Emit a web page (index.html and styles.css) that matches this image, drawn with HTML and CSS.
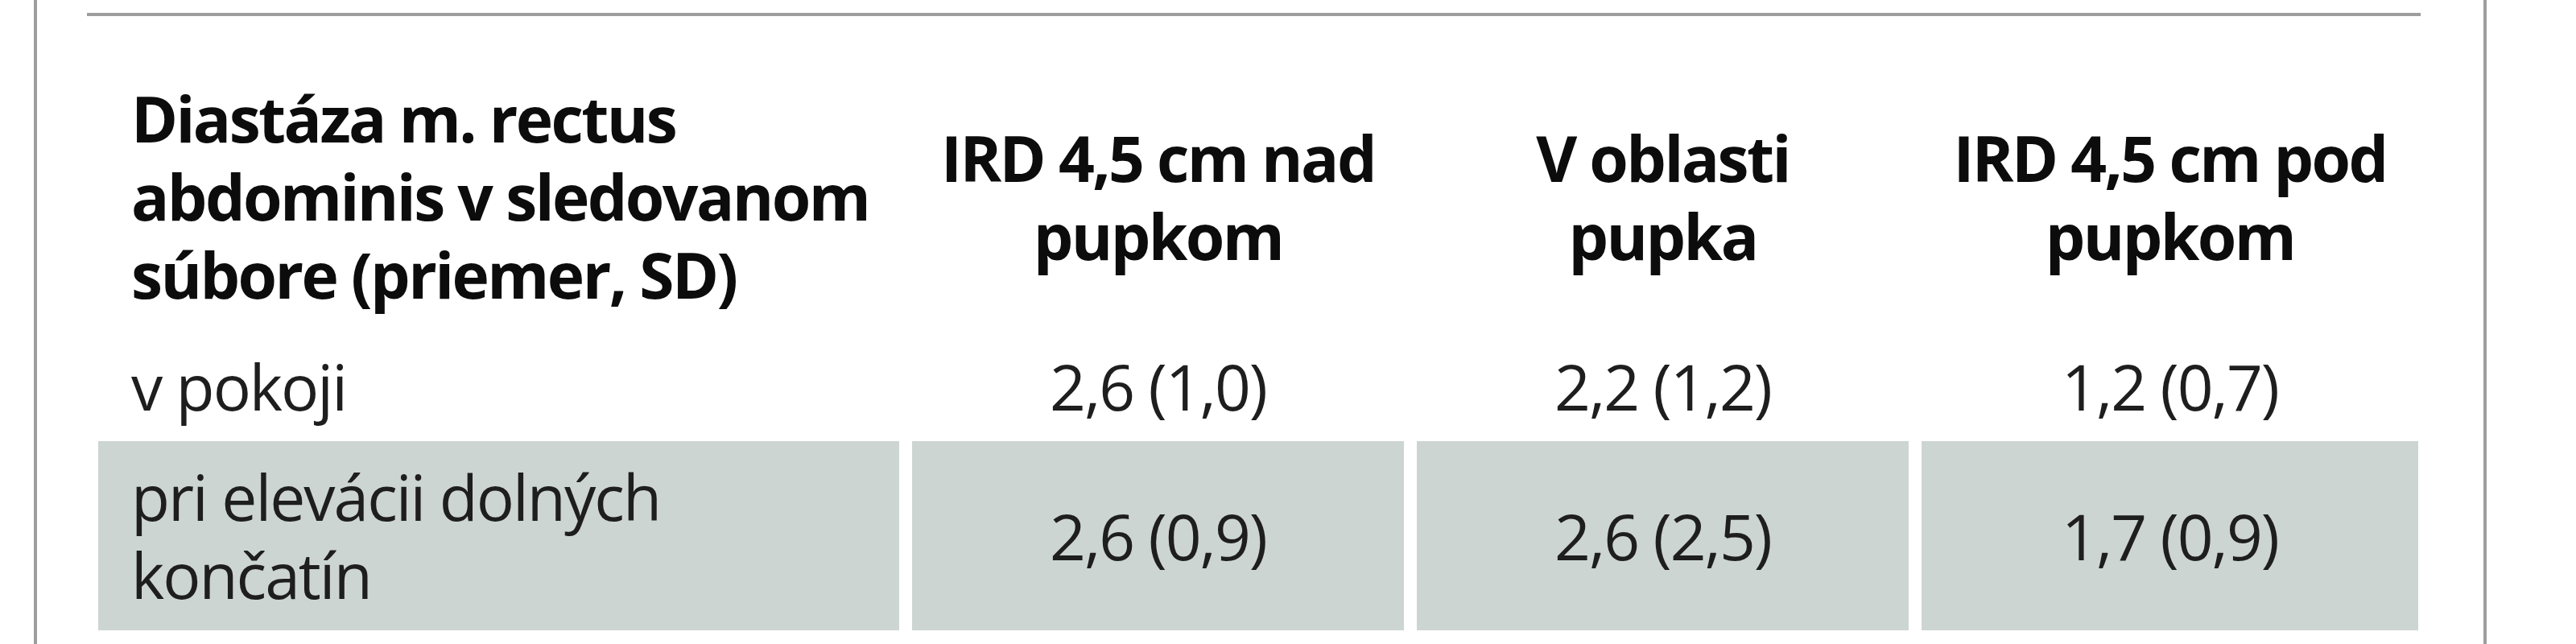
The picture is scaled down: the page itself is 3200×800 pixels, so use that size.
FILE: index.html
```html
<!DOCTYPE html>
<html lang="sk">
<head>
<meta charset="utf-8">
<title>Diastáza m. rectus abdominis</title>
<link rel="stylesheet" href="styles.css">
</head>
<body>
<div class="frame">
  <div class="rule"></div>
  <div class="grid">
    <div class="cell label head">Diastáza m. rectus<br>abdominis v sledovanom<br>súbore (priemer, SD)</div>
    <div class="cell head">IRD 4,5 cm nad<br>pupkom</div>
    <div class="cell head">V oblasti<br>pupka</div>
    <div class="cell head">IRD 4,5 cm pod<br>pupkom</div>

    <div class="cell label">v pokoji</div>
    <div class="cell">2,6 (1,0)</div>
    <div class="cell">2,2 (1,2)</div>
    <div class="cell">1,2 (0,7)</div>

    <div class="cell label shade">pri elevácii dolných<br>končatín</div>
    <div class="cell shade">2,6 (0,9)</div>
    <div class="cell shade">2,6 (2,5)</div>
    <div class="cell shade">1,7 (0,9)</div>
  </div>
</div>
</body>
</html>
```

FILE: styles.css
```css
html, body {
  margin: 0;
  padding: 0;
  background: #ffffff;
}

body {
  font-family: "Open Sans", "Noto Sans", sans-serif;
}

.frame {
  box-sizing: border-box;
  margin-left: 42px;
  width: 3047px;
  height: 800px;
  border-left: 4px solid #9d9d9d;
  border-right: 4px solid #9d9d9d;
  padding-top: 16px;
}

.rule {
  margin-left: 62px;
  width: 2899px;
  height: 4px;
  background: #9d9d9d;
}

.grid {
  margin-left: 76px;
  margin-top: 58px;
  display: grid;
  grid-template-columns: 995px 611px 611px 617px;
  column-gap: 16px;
  font-size: 78.5px;
  line-height: 97px;
  letter-spacing: -2px;
  color: #1e1e1e;
}

.cell {
  padding: 20px 0;
  display: flex;
  align-items: center;
  justify-content: center;
  text-align: center;
}

.cell.label {
  justify-content: flex-start;
  text-align: left;
  padding-left: 41px;
}

.head {
  font-weight: 700;
  color: #0c0c0c;
  letter-spacing: -2.6px;
  padding-bottom: 22px;
}

.shade {
  background: #cdd5d2;
  padding-bottom: 21px;
}
```
